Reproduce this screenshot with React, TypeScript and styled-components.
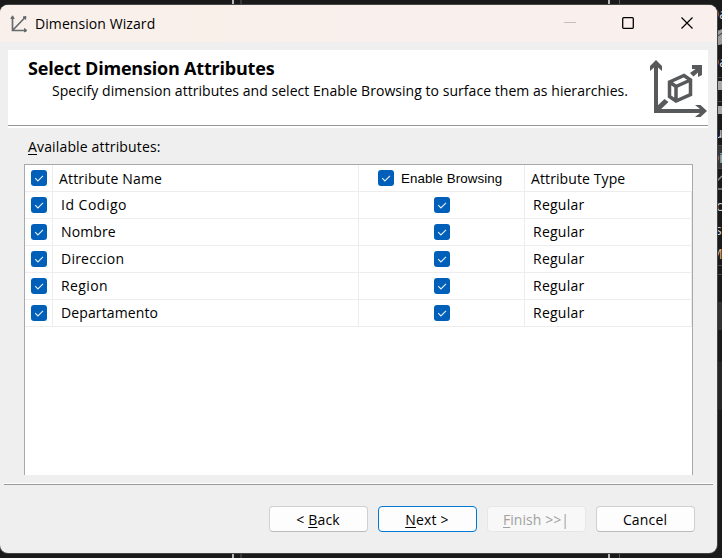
import React from "react";
import styled, { createGlobalStyle } from "styled-components";

const Global = createGlobalStyle`
  * { box-sizing: border-box; }
  body { margin: 0; overflow: hidden; background: #1a1a1a; }
`;

const Desktop = styled.div`
  position: relative;
  width: 722px;
  height: 558px;
  padding-top: 5px;
  overflow: hidden;
  background: #1a1a1a;
  font-family: "Open Sans", "Noto Sans", sans-serif;
  color: #000;
`;

const Backdrop = styled.svg`
  position: absolute;
  inset: 0;
`;

const Window = styled.div`
  position: relative;
  display: flex;
  flex-direction: column;
  width: 717px;
  height: 548px;
  border-radius: 8px;
  overflow: hidden;
  background: #efefef;
  box-shadow: 0 0 0 1px #444;
`;

const Text = styled.span<{ $size?: number; $track?: number; $bold?: boolean }>`
  font-size: ${(p) => p.$size ?? 14}px;
  letter-spacing: ${(p) => p.$track ?? 0}px;
  font-weight: ${(p) => (p.$bold ? 700 : 400)};
  line-height: 20px;
  white-space: pre;
`;

const ControlText = styled(Text)`
  padding-top: 1px;
  font-family: "Liberation Sans", sans-serif;
`;

const Key = styled.span`
  text-decoration: underline;
  text-decoration-thickness: 1px;
  text-underline-offset: 2px;
  text-decoration-skip-ink: none;
`;

const TitleBar = styled.header`
  display: flex;
  align-items: center;
  height: 37px;
  flex: none;
  padding-left: 10px;
  background: linear-gradient(90deg, #f9f0eb, #f9f0ea 30%, #f9efed 55%);
`;

const TitleIcon = styled.svg`
  margin-right: 7px;
`;

const Controls = styled.svg`
  margin-left: auto;
`;

const Banner = styled.section`
  display: flex;
  justify-content: space-between;
  height: 78px;
  flex: none;
  margin: 8px 9px 0 8px;
  padding-left: 20px;
  background: linear-gradient(#fff 75px, #979797 75px, #979797 76px, #fff 76px);
`;

const BannerText = styled.div`
  display: flex;
  flex-direction: column;
  padding-top: 8px;
`;

const Description = styled.div`
  display: flex;
  margin-top: 3px;
  padding-left: 24px;
`;

const Label = styled.div`
  display: flex;
  height: 36px;
  flex: none;
  padding: 9px 0 0 28px;
`;

const Grid = styled.section`
  width: 669px;
  height: 311px;
  flex: none;
  margin-left: 24px;
  border: solid #a9a9ad;
  border-width: 1px 1px 0;
  background: #fff;
`;

const Row = styled.div`
  display: grid;
  grid-template-columns: 28px 306px 166px 167px;
  width: 667px;
  height: 27px;
  border-bottom: 1px solid #ededed;
`;

const Cell = styled.div<{ $pad?: number; $center?: boolean }>`
  display: flex;
  align-items: center;
  justify-content: ${(p) => (p.$center ? "center" : "flex-start")};
  gap: 7px;
  padding-left: ${(p) => p.$pad ?? 0}px;
  border-right: 1px solid #ededed;
`;

const HeaderCell = styled(Cell)`
  padding-top: 2px;
  &:last-child { border-right: 0; }
`;

const Box = styled.span`
  display: flex;
  flex: none;
  width: 16px;
  height: 16px;
  border-radius: 3px;
  background: #005fb8;
`;

const Check = () => (
  <Box>
    <svg width="16" height="16" viewBox="0 0 16 16" fill="none">
      <path d="M4.2 8.2 L6.9 10.9 L12 5.8" stroke="#e6f1fa" strokeWidth="1.1" />
    </svg>
  </Box>
);

const Divider = styled.div`
  height: 2px;
  flex: none;
  margin: 8px 4px 0;
  background: linear-gradient(#fff 1px, #999 1px);
`;

const Footer = styled.footer`
  display: flex;
  justify-content: flex-end;
  gap: 10px;
  padding: 21px 22px 0 0;
`;

const Button = styled.button<{ $primary?: boolean }>`
  display: flex;
  align-items: center;
  justify-content: center;
  width: 99px;
  height: 26px;
  padding: 1px 1px 0 0;
  border: 1px solid ${(p) => (p.$primary ? "#0078d4" : "#d0d0d0")};
  border-bottom-color: ${(p) => (p.$primary ? "#0078d4" : "#bbb")};
  border-radius: 4px;
  background: #fdfdfd;
  font-family: inherit;
  color: #000;
  &:disabled {
    border-color: #e6e6e6;
    background: #f8f8f8;
    color: #a0a0a0;
  }
`;

const attributes: [string, number][] = [
  ["Id Codigo", 0.5],
  ["Nombre", 0.12],
  ["Direccion", 0.22],
  ["Region", 0.4],
  ["Departamento", 0.12],
];

const explorerItems: [string, number, number][] = [
  ["Da", 19, 709],
  ["Da", 67, 709],
  ["u", 138, 714],
  ["Di", 163, 709],
  ["c", 211, 716],
  ["s", 235, 715],
  ["M", 259, 710],
];

const Explorer = () => (
  <g>
    <path d="M717 145H722V168H717Z" fill="#353738" />
    <path d="M717 302H722V330H717Z" fill="#2e3233" />
    <path d="M717 362H722V410H717Z" fill="#232728" />
    <path d="M717 77.500H722M717 101.500H722M717 145.500H722M717 168.500H722M717 265.500H722M717 274.500H722" stroke="#45484a" />
    <path d="M716 33Q718 30 722 29V44Q719 46 716 44Z" fill="#9c9c9c" />
    <path d="M716 36Q719 36 722 33" stroke="#333" fill="none" />
    <path d="M717 81H722V90H717ZM717 106H722V114H717Z" fill="#a8a8a8" />
    <path d="M716 182L722 176M716 189H722" stroke="#8b8e90" strokeWidth="1.500" />
    {explorerItems.map(([label, y, x]) => (
      <text key={y} x={x} y={y} fontSize="14" fill={label === "M" ? "#d9b38a" : "#c9d6e6"}>{label}</text>
    ))}
  </g>
);

export default function App() {
  return (
    <>
      <Global />
      <Desktop>
        <Backdrop width="722" height="558">
          <path d="M233 0V558M609 0V558" stroke="#b8b8b8" strokeWidth="2" />
          <path d="M241 0V558M619.500 0V558" stroke="#555" strokeWidth="1" />
          <Explorer />
        </Backdrop>
        <Window>
          <TitleBar>
            <TitleIcon width="18" height="18" viewBox="0 0 18 18" fill="none" stroke="#666b6d">
              <path d="M2.500 2V15.500H16M2.500 15.500L14.500 3" strokeWidth="1.700" />
              <path d="M.8 3.500L2.500 .8L4.200 3.500ZM14.500 13.500L17 15.500L14.500 17ZM13 2L16 1.500L15.500 4.500Z" fill="#666b6d" strokeWidth="1" />
            </TitleIcon>
            <Text $track={0.08}>Dimension Wizard</Text>
            <Controls width="153" height="37" viewBox="0 0 153 37" fill="none">
              <path d="M0 17.500H12" stroke="#c5bebc" />
              <rect x="58.700" y="12.700" width="10.600" height="10.600" rx="1" stroke="#000" strokeWidth="1.300" />
              <path d="M117.500 12.500L128.500 23.500M128.500 12.500L117.500 23.500" stroke="#000" strokeWidth="1.200" />
            </Controls>
          </TitleBar>
          <Banner>
            <BannerText>
              <Text $size={18} $track={-0.2} $bold>Select Dimension Attributes</Text>
              <Description>
                <Text $track={0.045}>Specify dimension attributes and select Enable Browsing to surface them as hierarchies.</Text>
              </Description>
            </BannerText>
            <svg width="60" height="75" viewBox="648 50 60 75" fill="#58595b">
              <path d="M654 113V67.500L650 71V66L656 60L662 66V71L658 67.500V109H700L695 105H700.500L707 111L700.500 117H695L700 113Z" />
              <path d="M655 112V108L664.500 99L668.500 102L659 111Z" />
              <path d="M690 73L695.500 69H692V65H702V75L698 77V72.500L693.500 76.500Z" />
              <path d="M669.500 82L684 75.500L690.500 80V94.500L676 101L669.500 96.500ZM669.500 82L676 86.500L690.500 80M676 86.500V101" fill="#fff" stroke="#58595b" strokeWidth="3.500" />
            </svg>
          </Banner>
          <Label>
            <Text $track={0.15}><Key>A</Key>vailable attributes:</Text>
          </Label>
          <Grid>
            <Row>
              <Cell $pad={6}><Check /></Cell>
              <HeaderCell $pad={6}><Text $track={0.16}>Attribute Name</Text></HeaderCell>
              <Cell $pad={19}><Check /><ControlText $size={13.33} $track={0.08}>Enable Browsing</ControlText></Cell>
              <HeaderCell $pad={6}><Text $track={0.1}>Attribute Type</Text></HeaderCell>
            </Row>
            {attributes.map(([name, track]) => (
              <Row key={name}>
                <Cell $pad={6}><Check /></Cell>
                <Cell $pad={8}><Text $track={track}>{name}</Text></Cell>
                <Cell $center><Check /></Cell>
                <Cell $pad={8}><Text $track={0.25}>Regular</Text></Cell>
              </Row>
            ))}
          </Grid>
          <Divider />
          <Footer>
            <Button><Text $track={0.2}>&lt; <Key>B</Key>ack</Text></Button>
            <Button $primary><Text $track={0.2}><Key>N</Key>ext &gt;</Text></Button>
            <Button disabled><Text $track={0.05}><Key>F</Key>inish &gt;&gt;|</Text></Button>
            <Button><Text $track={0.15}>Cancel</Text></Button>
          </Footer>
        </Window>
      </Desktop>
    </>
  );
}
